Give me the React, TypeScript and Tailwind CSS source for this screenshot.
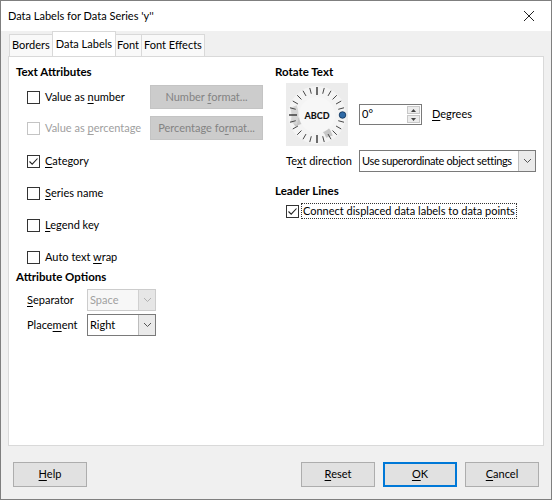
import React from "react";

const font = { fontFamily: 'Lato, "Noto Sans", sans-serif' };

const Mn = ({ children }: { children: React.ReactNode }) => <span className="underline underline-offset-2">{children}</span>;

const Check = ({ checked = false, disabled = false }: { checked?: boolean; disabled?: boolean }) => (
  <span
    className={`flex h-[13px] w-[13px] shrink-0 items-center justify-center border bg-white ${
      disabled ? "border-[#c4c4c4]" : "border-[#333333]"
    }`}
  >
    {checked && (
      <svg width="11" height="11" viewBox="0 0 11 11">
        <path d="M1.5 5.5 L4.2 8.2 L9.5 2.5" fill="none" stroke="#222" strokeWidth="1.1" />
      </svg>
    )}
  </span>
);

const CheckRow = ({
  children,
  checked,
  disabled,
  className = "",
}: {
  children: React.ReactNode;
  checked?: boolean;
  disabled?: boolean;
  className?: string;
}) => (
  <div className={`flex items-center gap-[5px] pl-[11px] ${className}`}>
    <Check checked={checked} disabled={disabled} />
    <span className={`whitespace-nowrap ${disabled ? "text-[#a0a0a0]" : "text-black"}`}>{children}</span>
  </div>
);

const Chevron = ({ disabled = false }: { disabled?: boolean }) => (
  <span
    className={`flex h-full w-[17px] shrink-0 items-center justify-center border-l ${
      disabled ? "border-[#d0d0d0] bg-[#e6e6e6]" : "border-[#bdbdbd] bg-[#eaeaea]"
    }`}
  >
    <svg width="9" height="6" viewBox="0 0 9 6">
      <path d="M1 1 L4.5 4.5 L8 1" fill="none" stroke={disabled ? "#b0b0b0" : "#555"} strokeWidth="1" />
    </svg>
  </span>
);

const Select = ({
  value,
  width,
  disabled = false,
  textClass = "",
}: {
  value: string;
  width: string;
  disabled?: boolean;
  textClass?: string;
}) => (
  <div
    className={`flex h-[22px] items-stretch overflow-hidden border ${width} ${
      disabled ? "border-[#cccccc] bg-[#f7f7f7] text-[#a0a0a0]" : "border-[#7a7a7a] bg-white text-black"
    }`}
  >
    <span className={`flex min-w-0 flex-1 items-center pl-[2px] whitespace-nowrap ${textClass}`}>{value}</span>
    <Chevron disabled={disabled} />
  </div>
);

const GrayButton = ({ children }: { children: React.ReactNode }) => (
  <div className="flex h-[24px] w-[113px] items-center justify-center border border-[#c4c4c4] bg-[#cccccc] text-[#838383]">
    <span className="whitespace-nowrap">{children}</span>
  </div>
);

const Button = ({ children, primary = false, className = "" }: { children: React.ReactNode; primary?: boolean; className?: string }) => (
  <div
    className={`flex h-[25px] w-[74px] items-center justify-center bg-[#e1e1e1] text-black ${
      primary ? "border-2 border-[#0078d7]" : "border border-[#adadad]"
    } ${className}`}
  >
    <span>{children}</span>
  </div>
);

const Dial = () => {
  const ticks = [];
  for (let a = 0; a < 360; a += 15) {
    if (a === 0) continue;
    const r = (a * Math.PI) / 180;
    const major = a % 90 === 0;
    const r1 = major ? 20 : 22;
    const r2 = 28;
    ticks.push(
      <line
        key={a}
        x1={31 + r1 * Math.cos(r)}
        y1={32 - r1 * Math.sin(r)}
        x2={31 + r2 * Math.cos(r)}
        y2={32 - r2 * Math.sin(r)}
        stroke="#333"
        strokeWidth={major ? 1.4 : 0.9}
      />
    );
  }
  const arc = (a0: number, a1: number, rr: number) => {
    const p = (a: number) => [31 + rr * Math.cos((a * Math.PI) / 180), 32 - rr * Math.sin((a * Math.PI) / 180)];
    const [x0, y0] = p(a0);
    const [x1, y1] = p(a1);
    return `M${x0} ${y0} A${rr} ${rr} 0 0 1 ${x1} ${y1}`;
  };
  return (
    <svg width="62" height="63" viewBox="0 0 62 63">
      <rect x="0" y="0" width="62" height="63" fill="#ececec" />
      <circle cx="31" cy="32" r="29" fill="#f4f4f4" />
      <path d={arc(200, 300, 25)} fill="none" stroke="#c6c6c6" strokeWidth="7" />
      <path d={arc(160, 200, 25)} fill="none" stroke="#d6d6d6" strokeWidth="7" />
      {ticks}
      <circle cx="31" cy="32" r="18" fill="#f7f7f7" />
      <text x="31" y="35.5" textAnchor="middle" fontSize="9" fontWeight="900" fill="#111" style={font}>
        ABCD
      </text>
      <circle cx="56.5" cy="32" r="3.3" fill="#2f6aa6" stroke="#0d2f55" strokeWidth="0.8" />
    </svg>
  );
};

export default function App() {
  return (
    <div className="h-[500px] w-[552px] overflow-hidden bg-[#f0f0f0] text-[11px] text-black" style={font}>
      <div className="flex h-full w-full flex-col border border-[#7f7f7f]">
        {/* title bar */}
        <div className="flex h-[30px] shrink-0 items-center justify-between bg-white pl-[7px] pr-[16px]">
          <span>Data Labels for Data Series 'y''</span>
          <svg width="12" height="12" viewBox="0 0 12 12">
            <path d="M1 1 L11 11 M11 1 L1 11" stroke="#222" strokeWidth="1" />
          </svg>
        </div>

        {/* tabs */}
        <div className="flex h-[25px] shrink-0 items-end pl-[8px]">
          <div className="flex h-[22px] items-center border border-b-0 border-[#d9d9d9] bg-[#f9f9f9] px-[2px]">Borders</div>
          <div className="-mx-[1px] z-10 flex h-[25px] items-center border border-b-0 border-[#d9d9d9] bg-white px-[3px]">Data Labels</div>
          <div className="flex h-[22px] items-center border border-b-0 border-l-0 border-[#d9d9d9] bg-[#f9f9f9] px-[2px]">Font</div>
          <div className="flex h-[22px] items-center border border-b-0 border-l-0 border-[#d9d9d9] bg-[#f9f9f9] px-[2px]">Font Effects</div>
        </div>

        {/* panel */}
        <div className="mx-[7px] flex h-[390px] shrink-0 border border-[#d9d9d9] bg-white">
          {/* left column */}
          <div className="flex w-[254px] flex-col pl-[7px] pt-[7px]">
            <div className="flex h-[16px] items-center text-[11.5px] font-bold">Text Attributes</div>
            <div className="mt-[5px] flex h-[24px] items-center justify-between">
              <CheckRow>
                Value as <Mn>n</Mn>umber
              </CheckRow>
              <GrayButton>
                Number <Mn>f</Mn>ormat...
              </GrayButton>
            </div>
            <div className="mt-[7px] flex h-[24px] items-center justify-between">
              <CheckRow disabled>
                Value as <Mn>p</Mn>ercentage
              </CheckRow>
              <GrayButton>
                Percentage fo<Mn>r</Mn>mat...
              </GrayButton>
            </div>
            <CheckRow checked className="mt-[9px] h-[24px]">
              <Mn>C</Mn>ategory
            </CheckRow>
            <CheckRow className="mt-[8px] h-[24px]">
              <Mn>S</Mn>eries name
            </CheckRow>
            <CheckRow className="mt-[8px] h-[24px]">
              <Mn>L</Mn>egend key
            </CheckRow>
            <CheckRow className="mt-[8px] h-[24px]">
              Auto text <Mn>w</Mn>rap
            </CheckRow>
            <div className="flex h-[16px] items-center text-[11.5px] font-bold">Attribute Options</div>
            <div className="mt-[4px] flex h-[22px] items-center pl-[11px]">
              <span className="w-[60px]">
                <Mn>S</Mn>eparator
              </span>
              <Select value="Space" width="w-[69px]" disabled />
            </div>
            <div className="mt-[3px] flex h-[22px] items-center pl-[11px]">
              <span className="w-[60px]">
                Place<Mn>m</Mn>ent
              </span>
              <Select value="Right" width="w-[69px]" />
            </div>
          </div>

          {/* right column */}
          <div className="flex flex-1 flex-col pl-[12px] pt-[7px]">
            <div className="flex h-[16px] items-center text-[11.5px] font-bold">Rotate Text</div>
            <div className="mt-[3px] flex items-center pl-[11px]">
              <Dial />
              <div className="ml-[11px] flex h-[21px] w-[63px] items-stretch border border-[#7a7a7a] bg-white">
                <span className="flex flex-1 items-center pl-[2px]">0°</span>
                <div className="my-[1px] mr-[1px] flex w-[13px] flex-col gap-[1px]">
                  <span className="flex flex-1 items-center justify-center border border-[#c8c8c8] bg-[#ececec]">
                    <svg width="5" height="3" viewBox="0 0 5 3">
                      <path d="M0 3 L2.5 0 L5 3 Z" fill="#444" />
                    </svg>
                  </span>
                  <span className="flex flex-1 items-center justify-center border border-[#c8c8c8] bg-[#ececec]">
                    <svg width="5" height="3" viewBox="0 0 5 3">
                      <path d="M0 0 L2.5 3 L5 0 Z" fill="#444" />
                    </svg>
                  </span>
                </div>
              </div>
              <span className="ml-[10px]">
                <Mn>D</Mn>egrees
              </span>
            </div>
            <div className="mt-[4px] flex h-[22px] items-center pl-[11px]">
              <span className="w-[73px] whitespace-nowrap">
                Te<Mn>x</Mn>t direction
              </span>
              <Select value="Use superordinate object settings" width="w-[177px]" textClass="tracking-[-0.35px]" />
            </div>
            <div className="mt-[11px] flex h-[16px] items-center text-[11.5px] font-bold">Leader Lines</div>
            <div className="mt-[3px] flex h-[18px] items-center gap-[2px] pl-[11px]">
              <Check checked />
              <span className="whitespace-nowrap border border-dotted border-[#333] px-[1px] leading-[14px]">
                Connect displaced data labels to data points
              </span>
            </div>
          </div>
        </div>

        {/* buttons */}
        <div className="mt-[16px] flex h-[25px] shrink-0 items-center px-[12px]">
          <Button>
            <Mn>H</Mn>elp
          </Button>
          <div className="flex-1" />
          <Button>
            <Mn>R</Mn>eset
          </Button>
          <Button primary className="ml-[8px]">
            <Mn>O</Mn>K
          </Button>
          <Button className="ml-[8px]">
            <Mn>C</Mn>ancel
          </Button>
        </div>
      </div>
    </div>
  );
}
